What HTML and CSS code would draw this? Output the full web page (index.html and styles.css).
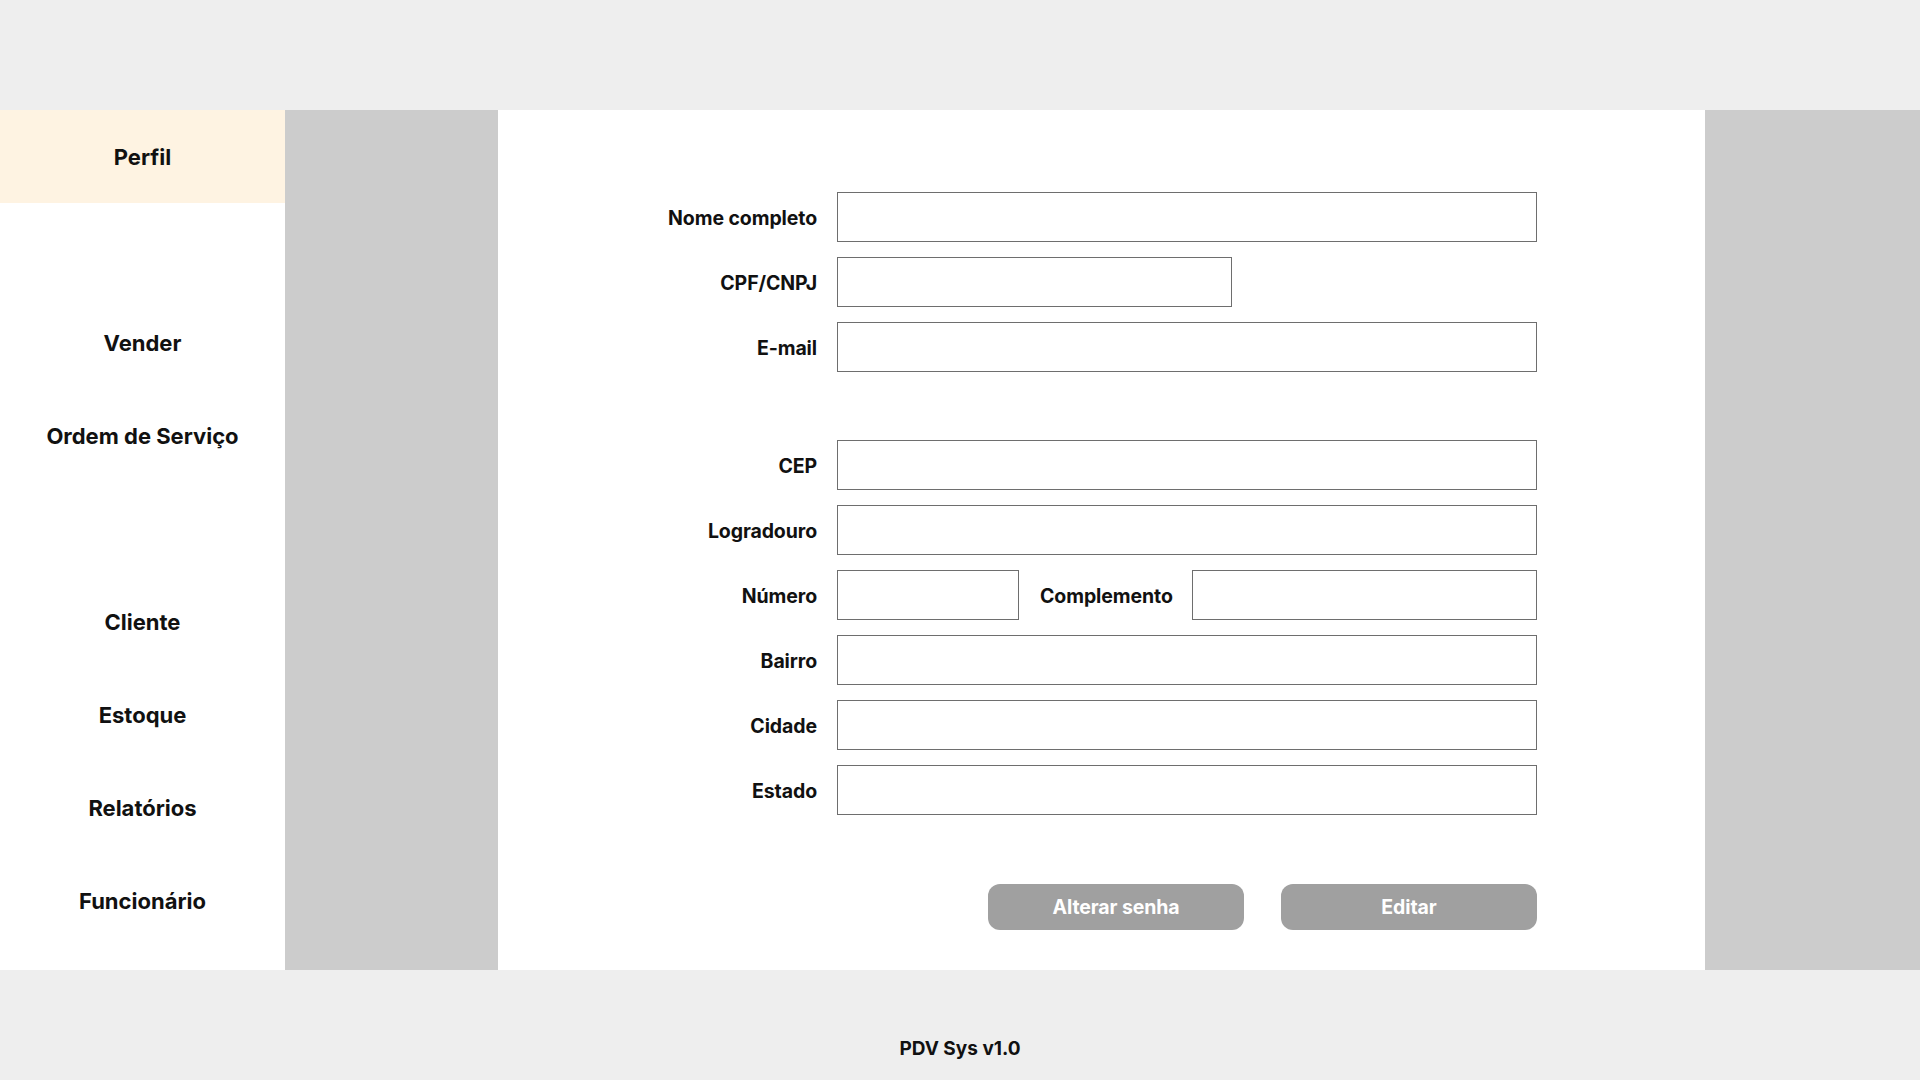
FILE: index.html
```html
<!DOCTYPE html>
<html lang="pt-BR">
<head>
<meta charset="utf-8">
<title>PDV Sys - Perfil</title>
<link rel="stylesheet" href="styles.css">
</head>
<body>
<div class="page">
  <header class="topbar"></header>
  <div class="main">
    <nav class="sidebar">
      <div class="nav-item active">Perfil</div>
      <div class="nav-item spacer"></div>
      <div class="nav-item">Vender</div>
      <div class="nav-item">Ordem de Serviço</div>
      <div class="nav-item spacer"></div>
      <div class="nav-item">Cliente</div>
      <div class="nav-item">Estoque</div>
      <div class="nav-item">Relatórios</div>
      <div class="nav-item">Funcionário</div>
    </nav>
    <div class="gutter"></div>
    <section class="content">
      <form class="form">
        <div class="row">
          <label class="label">Nome completo</label>
          <div class="field full"></div>
        </div>
        <div class="row">
          <label class="label">CPF/CNPJ</label>
          <div class="field medium"></div>
        </div>
        <div class="row">
          <label class="label">E-mail</label>
          <div class="field full"></div>
        </div>
        <div class="row section-gap">
          <label class="label">CEP</label>
          <div class="field full"></div>
        </div>
        <div class="row">
          <label class="label">Logradouro</label>
          <div class="field full"></div>
        </div>
        <div class="row">
          <label class="label">Número</label>
          <div class="field small"></div>
          <label class="label inline">Complemento</label>
          <div class="field grow"></div>
        </div>
        <div class="row">
          <label class="label">Bairro</label>
          <div class="field full"></div>
        </div>
        <div class="row">
          <label class="label">Cidade</label>
          <div class="field full"></div>
        </div>
        <div class="row">
          <label class="label">Estado</label>
          <div class="field full"></div>
        </div>
        <div class="actions">
          <button type="button" class="btn">Alterar senha</button>
          <button type="button" class="btn">Editar</button>
        </div>
      </form>
    </section>
    <div class="gutter right"></div>
  </div>
  <footer class="footer">PDV Sys v1.0</footer>
</div>
</body>
</html>
```

FILE: styles.css
```css
* { box-sizing: border-box; }
html, body { margin: 0; padding: 0; }
body {
  font-family: Inter, "Noto Sans", "Liberation Sans", sans-serif;
  color: #111;
  background: #eeeeee;
}
.page {
  width: 1920px;
  height: 1080px;
  display: flex;
  flex-direction: column;
}
.topbar {
  height: 110px;
  background: #eeeeee;
  flex: none;
}
.main {
  height: 860px;
  display: flex;
  flex: none;
}
.sidebar {
  width: 285px;
  background: #ffffff;
  display: flex;
  flex-direction: column;
  flex: none;
}
.nav-item {
  height: 93px;
  display: flex;
  align-items: center;
  justify-content: center;
  font-size: 22px;
  font-weight: 700;
  color: #111;
  letter-spacing: 0;
}
.nav-item.active { background: #fef3e2; }
.gutter {
  width: 213px;
  background: #cccccc;
  flex: none;
}
.gutter.right { width: 215px; }
.content {
  flex: 1;
  background: #ffffff;
  display: flex;
  justify-content: center;
  padding-top: 82px;
}
.form {
  width: 871px;
  display: flex;
  flex-direction: column;
  gap: 15px;
}
.row {
  display: flex;
  align-items: center;
  height: 50px;
}
.row.section-gap { margin-top: 53px; }
.label {
  width: 151px;
  text-align: right;
  font-size: 19.5px;
  font-weight: 700;
  letter-spacing: -0.1px;
  margin-right: 20px;
  padding-top: 2px;
  flex: none;
  white-space: nowrap;
}
.label.inline {
  width: auto;
  margin: 0 19px 0 21px;
}
.field {
  height: 50px;
  border: 1.5px solid #6e6e6e;
  background: #fff;
  flex: none;
}
.field.full { width: 700px; }
.field.medium { width: 395px; }
.field.small { width: 182px; }
.field.grow { flex: 1; }
.actions {
  display: flex;
  justify-content: flex-end;
  gap: 37px;
  margin-top: 54px;
}
.btn {
  width: 256px;
  height: 46px;
  border: none;
  border-radius: 12px;
  background: #a0a0a0;
  color: #ffffff;
  font-family: inherit;
  font-size: 19.5px;
  font-weight: 700;
  letter-spacing: -0.1px;
}
.footer {
  flex: 1;
  background: #eeeeee;
  display: flex;
  align-items: flex-end;
  justify-content: center;
  padding-bottom: 20px;
  font-size: 19px;
  font-weight: 700;
}
```
